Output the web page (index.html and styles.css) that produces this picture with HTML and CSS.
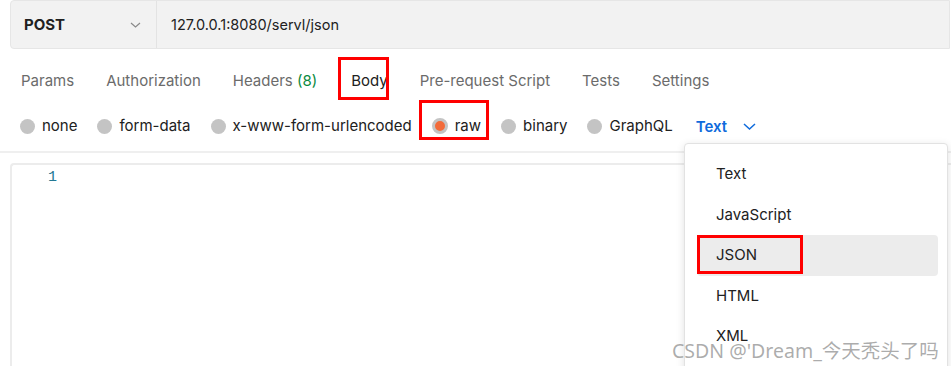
FILE: index.html
```html
<!DOCTYPE html>
<html lang="en">
<head>
    <meta charset="UTF-8">
    <meta name="viewport" content="width=device-width, initial-scale=1.0">
    <title>POST 127.0.0.1:8080/servl/json</title>
    <link rel="stylesheet" href="styles.css">
</head>
<body>

<div class="request-bar">
    <div class="method">
        <span>POST</span>
        <svg class="chevron" width="11" height="6" viewBox="0 0 11 6"><path d="M1 1 L5.5 5 L10 1" fill="none" stroke="#8a8a8a" stroke-width="1.2"/></svg>
    </div>
    <div class="url">127.0.0.1:8080/servl/json</div>
</div>

<nav class="tabs">
    <span class="tab">Params</span>
    <span class="tab">Authorization</span>
    <span class="tab">Headers <span class="count">(8)</span></span>
    <span class="tab active marked">Body</span>
    <span class="tab">Pre-request Script</span>
    <span class="tab">Tests</span>
    <span class="tab">Settings</span>
</nav>

<div class="body-types">
    <label class="radio"><span class="dot"></span>none</label>
    <label class="radio"><span class="dot"></span>form-data</label>
    <label class="radio"><span class="dot"></span>x-www-form-urlencoded</label>
    <label class="radio checked marked"><span class="dot"></span>raw</label>
    <label class="radio"><span class="dot"></span>binary</label>
    <label class="radio"><span class="dot"></span>GraphQL</label>
    <span class="lang-select">Text
        <svg width="13" height="7" viewBox="0 0 13 7"><path d="M1 1 L6.5 6 L12 1" fill="none" stroke="#0f6bdc" stroke-width="1.5"/></svg>
    </span>
</div>

<div class="divider"></div>

<div class="editor">
    <span class="line-no">1</span>
</div>

<ul class="dropdown">
    <li>Text</li>
    <li>JavaScript</li>
    <li class="selected marked">JSON</li>
    <li>HTML</li>
    <li>XML</li>
</ul>

<div class="watermark">CSDN @'Dream_今天秃头了吗</div>

</body>
</html>
```

FILE: styles.css
```css
body {
    margin: 0;
    font-family: Inter, "Noto Sans", sans-serif;
    background: #fff;
    color: #212121;
    height: 366px;
    overflow: hidden;
    position: relative;
}

.request-bar {
    display: flex;
    height: 49px;
    box-sizing: border-box;
    margin: 0 1px 0 10px;
    background: #f2f2f2;
    border: 1px solid #e6e6e6;
    border-radius: 4px 0 0 4px;
}

.method {
    width: 146px;
    box-sizing: border-box;
    display: flex;
    align-items: center;
    justify-content: space-between;
    padding: 0 15px 0 13px;
    border-right: 1px solid #e3e3e3;
    font-size: 15px;
    font-weight: 700;
}

.url {
    display: flex;
    align-items: center;
    padding-left: 14px;
    font-size: 14.5px;
}

.tabs {
    display: flex;
    gap: 32px;
    height: 46px;
    margin-top: 8px;
    padding: 0 20px 0 21px;
}

.tab {
    padding-top: 1px;
    line-height: 46px;
    font-size: 15px;
    color: #6b6b6b;
}

.tab .count {
    color: #0a8a3e;
}

.tab.active {
    margin-left: 2px;
    color: #212121;
}

.marked {
    position: relative;
}

.marked::after {
    content: "";
    position: absolute;
    box-sizing: border-box;
    border: 3px solid #f00;
}

.tab.marked::after {
    top: 0;
    height: 43px;
    left: -13px;
    right: -1px;
}

.body-types {
    display: flex;
    align-items: center;
    gap: 20px;
    height: 46px;
    padding: 0 20px;
}

.radio {
    display: flex;
    align-items: center;
    gap: 7px;
    font-size: 15px;
    line-height: 18px;
}

.dot {
    width: 15px;
    height: 15px;
    border-radius: 50%;
    background: #c4c4c4;
    box-sizing: border-box;
}

.radio.checked .dot {
    width: 16px;
    height: 16px;
    background: #f26b3a;
    border: 3.5px solid #c4c4c4;
}

.radio.marked::after {
    top: -17px;
    height: 40px;
    left: -13px;
    right: -8px;
}

.lang-select {
    display: flex;
    align-items: center;
    gap: 16px;
    margin-left: 3px;
    font-size: 15px;
    font-weight: 600;
    color: #0f6bdc;
}

.divider {
    height: 2px;
    margin-top: 2px;
    background: #efefef;
}

.editor {
    height: 220px;
    margin: 10px 0 0 10px;
    padding: 0 0 0 36px;
    border-top: 2px solid #ececec;
    border-left: 2px solid #ececec;
    border-top-left-radius: 4px;
}

.line-no {
    font-family: "Liberation Mono", monospace;
    font-size: 15px;
    line-height: 18px;
    color: #237893;
}

.dropdown {
    position: absolute;
    left: 684px;
    top: 143px;
    width: 264px;
    height: 240px;
    box-sizing: border-box;
    margin: 0;
    padding: 10px 9px 0 12px;
    list-style: none;
    background: #fff;
    border: 1px solid #e2e2e2;
    border-radius: 4px;
    box-shadow: 0 2px 8px rgba(0, 0, 0, 0.12);
}

.dropdown li {
    height: 40.5px;
    line-height: 40.5px;
    padding-left: 19px;
    font-size: 15px;
    border-radius: 4px;
}

.dropdown li.selected {
    background: #ececec;
}

.dropdown li.marked::after {
    top: 0;
    left: 0;
    width: 106px;
    height: 39px;
}

.watermark {
    position: absolute;
    left: 672px;
    top: 335px;
    font-family: "Noto Sans", "Noto Sans CJK SC", sans-serif;
    font-size: 19.5px;
    color: rgba(90, 90, 90, 0.5);
    white-space: nowrap;
}
```
